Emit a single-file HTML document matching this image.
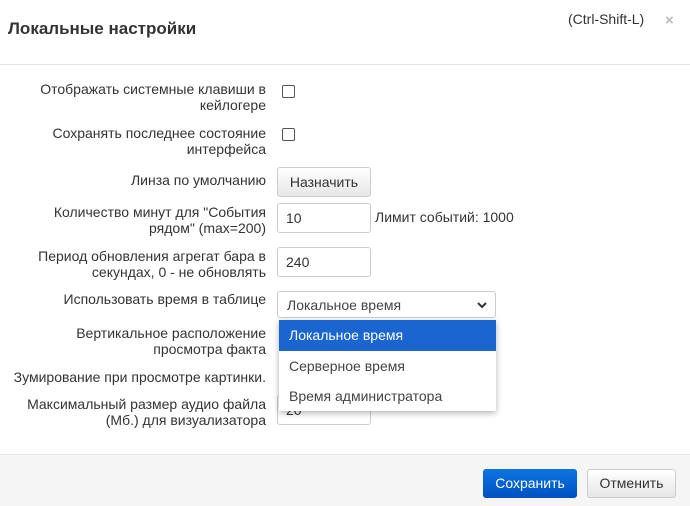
<!DOCTYPE html><html><head><style>
body{margin:0;width:690px;height:505px;overflow:hidden;background:#fff;font-family:"Liberation Sans",Arial,sans-serif;font-size:14px;color:#333;position:relative}
.a{position:absolute}
.l{position:absolute;right:424px;text-align:right;line-height:16px;width:256px}
.cb{position:absolute;left:282px;width:11px;height:11px;border:1px solid #555;border-radius:2px;background:#fff}
.in{position:absolute;left:277px;width:84px;height:28px;border:1px solid #ccc;border-radius:3px;padding-left:8px;line-height:28px;background:#fff;box-sizing:content-box}
</style></head><body>
<div class="a" style="left:8px;top:19px;font-size:17px;font-weight:bold;color:#333">Локальные настройки</div>
<div class="a" style="left:568px;top:11px;color:#333">(Ctrl-Shift-L)</div>
<div class="a" style="left:665px;top:12px;color:#bbb;font-size:15px;font-weight:bold">×</div>
<div class="a" style="left:0;top:64px;width:690px;height:1px;background:#e5e5e5"></div>

<div class="l" style="top:81px">Отображать системные клавиши в кейлогере</div>
<div class="cb" style="top:85px"></div>
<div class="l" style="top:125px">Сохранять последнее состояние интерфейса</div>
<div class="cb" style="top:128px"></div>
<div class="l" style="top:172px">Линза по умолчанию</div>
<div class="a" style="left:277px;top:167px;width:92px;height:28px;border:1px solid #ccc;border-radius:3px;background:linear-gradient(#fff,#e6e6e6);text-align:center;line-height:28px">Назначить</div>
<div class="l" style="top:204px">Количество минут для "События рядом" (max=200)</div>
<div class="in" style="top:203px">10</div>
<div class="a" style="left:375px;top:209px">Лимит событий: 1000</div>
<div class="l" style="top:248px">Период обновления агрегат бара в секундах, 0 - не обновлять</div>
<div class="in" style="top:247px">240</div>
<div class="l" style="top:291px">Использовать время в таблице</div>
<div class="a" style="left:277px;top:291px;height:27px;border:1px solid #ccc;border-radius:3px;line-height:27px;padding-left:9px;box-sizing:border-box;width:219px;color:#444">Локальное время<svg style="position:absolute;right:8px;top:10px" width="10" height="7" viewBox="0 0 10 7"><path d="M1 1l4 4 4-4" stroke="#333" stroke-width="2" fill="none"/></svg></div>
<div class="l" style="top:325px">Вертикальное расположение просмотра факта</div>
<div class="l" style="top:369px">Зумирование при просмотре картинки.</div>
<div class="l" style="top:396px">Максимальный размер аудио файла (Мб.) для визуализатора</div>
<div class="in" style="top:395px">20</div>
<div class="a" style="left:279px;top:320px;width:217px;height:91px;background:#fff;box-shadow:0 2px 6px rgba(0,0,0,.3);font-size:14px">
<div style="height:31px;line-height:31px;background:#1a65d0;color:#fff;padding-left:10px">Локальное время</div>
<div style="height:30px;line-height:30px;padding-left:10px;color:#444">Серверное время</div>
<div style="height:30px;line-height:30px;padding-left:10px;color:#444">Время администратора</div></div>

<div class="a" style="left:0;top:454px;width:690px;height:51px;background:#f5f5f5;border-top:1px solid #e5e5e5"></div>
<div class="a" style="left:483px;top:469px;width:94px;height:29px;border-radius:3px;background:linear-gradient(#0a75e0,#0050c0);color:#fff;text-align:center;line-height:29px;font-size:14px">Сохранить</div>
<div class="a" style="left:587px;top:469px;width:87px;height:27px;border:1px solid #ccc;border-radius:3px;background:linear-gradient(#fff,#e6e6e6);text-align:center;line-height:27px;font-size:14px">Отменить</div>
</body></html>
